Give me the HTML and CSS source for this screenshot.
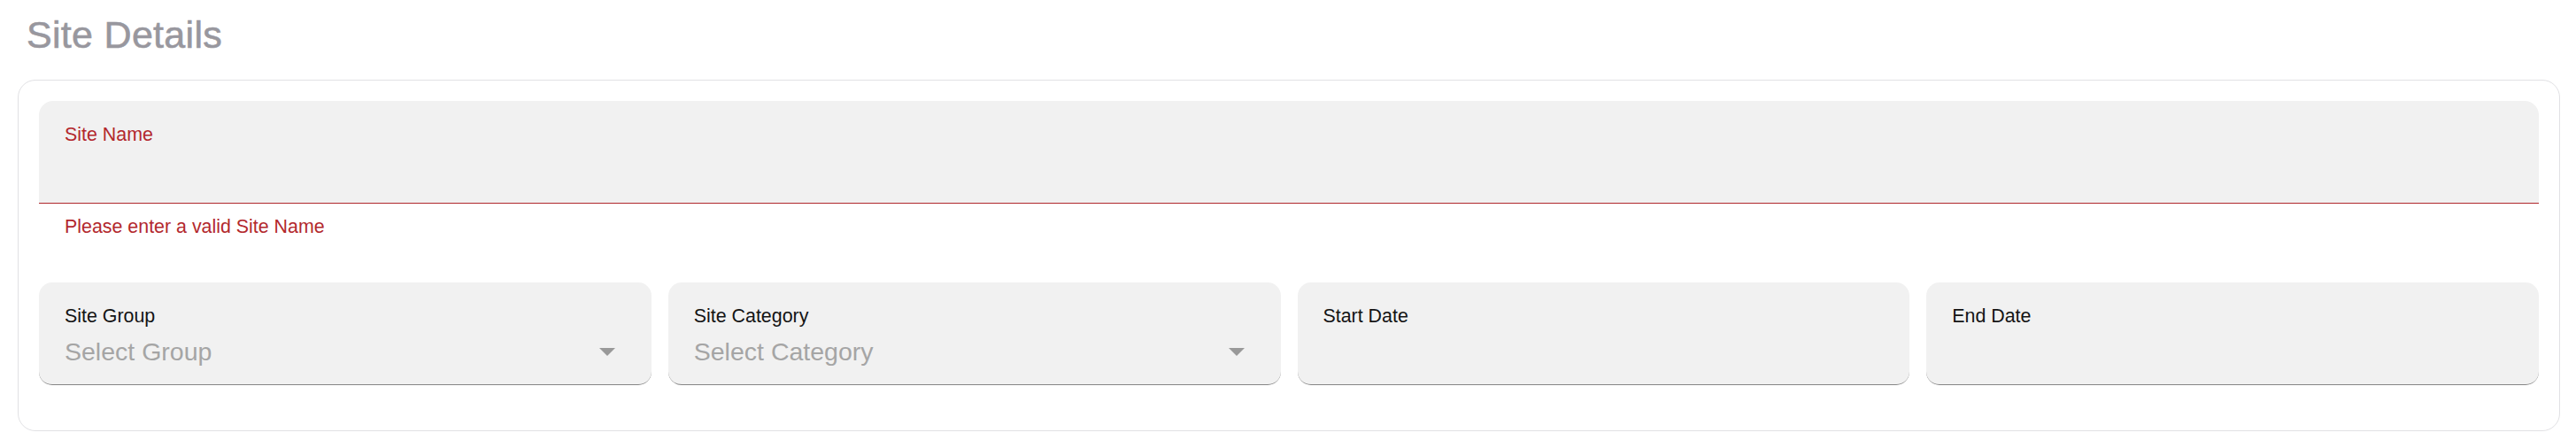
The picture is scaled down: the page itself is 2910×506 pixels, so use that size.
FILE: index.html
```html
<!DOCTYPE html>
<html lang="en">
<head>
<meta charset="utf-8">
<title>Site Details</title>
<link rel="stylesheet" href="styles.css">
</head>
<body>
  <h1 class="page-title">Site Details</h1>
  <section class="card">
    <div class="field-group">
      <div class="field field-wide field-error">
        <span class="field-label">Site Name</span>
      </div>
      <p class="helper-error">Please enter a valid Site Name</p>
    </div>
    <div class="field-row">
      <div class="field field-select">
        <span class="field-label">Site Group</span>
        <div class="select-line">
          <span class="placeholder">Select Group</span>
          <svg class="caret" width="18" height="9" viewBox="0 0 18 9"><path d="M0 0h18L9 9z"/></svg>
        </div>
      </div>
      <div class="field field-select">
        <span class="field-label">Site Category</span>
        <div class="select-line">
          <span class="placeholder">Select Category</span>
          <svg class="caret" width="18" height="9" viewBox="0 0 18 9"><path d="M0 0h18L9 9z"/></svg>
        </div>
      </div>
      <div class="field field-select">
        <span class="field-label">Start Date</span>
      </div>
      <div class="field field-select">
        <span class="field-label">End Date</span>
      </div>
    </div>
  </section>
</body>
</html>
```
FILE: styles.css
```css
* { box-sizing: border-box; }
html, body {
  margin: 0;
  padding: 0;
  background: #ffffff;
  font-family: "Liberation Sans", Arial, Helvetica, sans-serif;
}
.page-title {
  margin: 0;
  padding: 14px 0 0 30px;
  font-size: 43px;
  line-height: 50px;
  font-weight: 400;
  letter-spacing: 0.3px;
  color: #98979e;
  -webkit-text-stroke: 0.6px #98979e;
}
.card {
  margin: 26px 18px 0 20px;
  border: 1px solid #e1e1e4;
  border-radius: 20px;
  padding: 23px 23px 23px;
  background: #fff;
}
.field {
  background: #f1f1f1;
  height: 116px;
  padding: 26px 41px 0 29px;
  display: flex;
  flex-direction: column;
}
.field-label {
  display: block;
  font-size: 21.4px;
  line-height: 24px;
  color: #141414;
}
.field-wide {
  border-radius: 16px 16px 0 0;
}
.field-error {
  border-bottom: 1px solid #b0282c;
}
.field-error .field-label {
  color: #b3282d;
}
.helper-error {
  margin: 14px 0 0 29px;
  font-size: 21.4px;
  line-height: 24px;
  color: #b3282d;
}
.field-row {
  display: grid;
  grid-template-columns: repeat(4, 1fr);
  gap: 19px;
  margin-top: 51px;
  margin-bottom: 28px;
}
.field-select {
  border-radius: 15px;
  border-bottom: 1px solid #858585;
}
.select-line {
  display: flex;
  align-items: center;
  margin-top: 12px;
}
.placeholder {
  flex: 1;
  font-size: 28.5px;
  line-height: 33px;
  color: #a5a5a5;
}
.caret {
  display: block;
  fill: #999999;
  flex: none;
}
```
